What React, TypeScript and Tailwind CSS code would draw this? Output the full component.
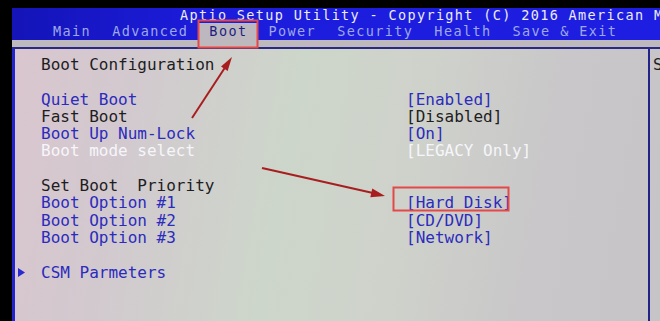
import React from 'react';

type Row = {
  label?: string;
  value?: string;
  tone?: 'blue' | 'black' | 'white';
  valueTone?: 'blue' | 'black' | 'white';
};

const toneClass = {
  blue: 'text-[#2b2bbd]',
  black: 'text-[#1d1d22]',
  white: 'text-[#f6f6fa]',
};

const rows: Row[] = [
  { label: 'Boot Configuration', tone: 'black' },
  {},
  { label: 'Quiet Boot', value: '[Enabled]', tone: 'blue', valueTone: 'blue' },
  { label: 'Fast Boot', value: '[Disabled]', tone: 'black', valueTone: 'black' },
  { label: 'Boot Up Num-Lock', value: '[On]', tone: 'blue', valueTone: 'blue' },
  { label: 'Boot mode select', value: '[LEGACY Only]', tone: 'white', valueTone: 'white' },
  {},
  { label: 'Set Boot  Priority', tone: 'black' },
  { label: 'Boot Option #1', value: '[Hard Disk]', tone: 'blue', valueTone: 'blue' },
  { label: 'Boot Option #2', value: '[CD/DVD]', tone: 'blue', valueTone: 'blue' },
  { label: 'Boot Option #3', value: '[Network]', tone: 'blue', valueTone: 'blue' },
  {},
];

const tabs = ['Main', 'Advanced', 'Boot', 'Power', 'Security', 'Health', 'Save & Exit'];

const App: React.FC = () => {
  return (
    <div className="relative w-[660px] h-[321px] overflow-hidden bg-black font-['DejaVu_Sans_Mono','Liberation_Mono',monospace] text-[16px]">
      <div className="ml-[12px] mt-[8px] h-[313px] flex flex-col">
        {/* header */}
        <div className="h-[32px] bg-[linear-gradient(90deg,#1414b8_0%,#1c1cdc_30%,#1e1ee2_100%)] flex flex-col text-[13.5px]">
          <div className="h-[15px] pl-[168px] leading-[15px] tracking-[1.35px] text-[#ececf8] whitespace-pre overflow-hidden">
            Aptio Setup Utility - Copyright (C) 2016 American Megatrends, Inc.
          </div>
          <div className="h-[17px] pl-[30px] flex leading-[17px] tracking-[1.4px] whitespace-pre">
            {tabs.map((t) => (
              <div
                key={t}
                className={
                  t === 'Boot'
                    ? 'pl-[11px] pr-[10px] bg-[#bdb8c0] text-[#1e1e80]'
                    : 'pl-[11px] pr-[10px] text-[#9ea8ea]'
                }
              >
                {t}
              </div>
            ))}
          </div>
        </div>
        <div className="h-[7px] bg-[#bdb9bd]" />

        {/* body */}
        <div className="flex-1 flex border-t-2 border-[#2a2a86] bg-[linear-gradient(100deg,#dac6cf_0%,#d2c9cf_18%,#cdd6ca_42%,#cfd2cb_60%,#c9c7c9_80%,#c6c4c6_100%)]">
          <div className="w-[638px] border-l-[3px] border-r-2 border-l-[#2323cc] border-r-[#22228a] pl-[26px] pt-[7px]">
            {rows.map((r, i) => (
              <div key={i} className="h-[17.3px] leading-[17.3px] flex whitespace-pre">
                <div className={`w-[365px] ${r.tone ? toneClass[r.tone] : ''}`}>{r.label ?? ''}</div>
                <div className={r.valueTone ? toneClass[r.valueTone] : ''}>{r.value ?? ''}</div>
              </div>
            ))}
            <div className="h-[17.3px] leading-[17.3px] flex items-center -ml-[26px] text-[#2b2bbd]">
              <svg width="26" height="11" viewBox="0 0 26 11" className="shrink-0">
                <path d="M3 1 L10 5.5 L3 10 Z" fill="#2a2ad0" />
              </svg>
              <span className="whitespace-pre">CSM Parmeters</span>
            </div>
          </div>
          <div className="flex-1 overflow-hidden pl-[3px] pt-[7px] leading-[17.3px] text-[#1d1d22] whitespace-pre">
            Select Screen
          </div>
        </div>
      </div>

      {/* photo annotations */}
      <svg className="absolute inset-0 pointer-events-none" width="660" height="321" viewBox="0 0 660 321">
        <rect x="198.5" y="20.5" width="59" height="27" fill="none" stroke="#e44848" strokeWidth="2" />
        <rect x="393.5" y="187.5" width="115" height="23" fill="none" stroke="#e44848" strokeWidth="2" />
        <line x1="192" y1="118" x2="226" y2="66" stroke="#a81e1e" strokeWidth="2" />
        <path d="M232 57 L227.6 70.9 L221 66.5 Z" fill="#a81e1e" />
        <line x1="262" y1="168" x2="373" y2="193" stroke="#a81e1e" strokeWidth="2" />
        <path d="M385 196 L370.3 197.3 L372.3 188.5 Z" fill="#a81e1e" />
      </svg>
    </div>
  );
};

export default App;
